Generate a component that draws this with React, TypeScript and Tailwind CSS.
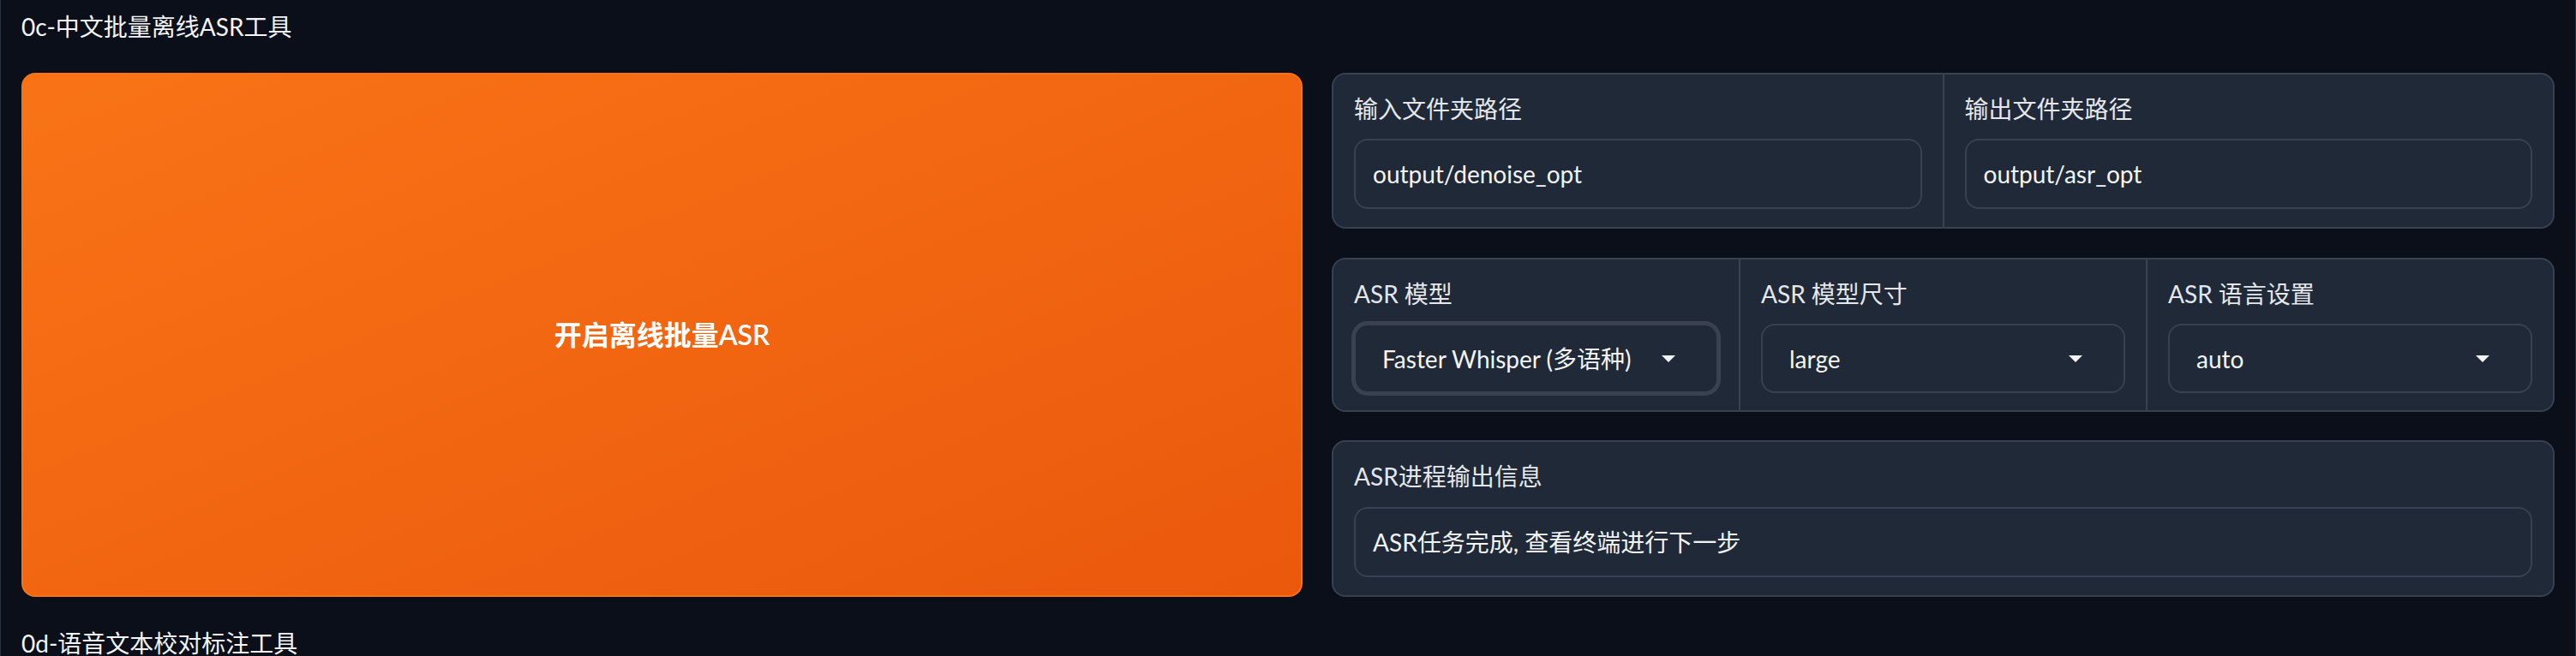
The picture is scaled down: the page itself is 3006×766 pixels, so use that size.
import React from "react";

function Arrow() {
  return (
    <svg width="16" height="8" viewBox="0 0 16 8" className="shrink-0">
      <path d="M0 0 L16 0 L8 8 Z" fill="#f3f4f6" />
    </svg>
  );
}

function TextCell({ label, value, last }: { label: string; value: string; last?: boolean }) {
  return (
    <div className={"flex-1 basis-0 flex flex-col px-6 pt-[19px] pb-[21px] " + (last ? "border-l-2 border-[#374151]" : "")}>
      <div className="h-[42px] leading-[42px] text-[28px] text-[#e5e7eb]">{label}</div>
      <div className="mt-[14px] h-[82px] rounded-2xl border-2 border-[#374151] bg-[#1f2937] flex items-center pl-[20px] text-[28px] text-[#f3f4f6]">
        {value}
      </div>
    </div>
  );
}

function DropCell({ label, value, first, focused }: { label: string; value: string; first?: boolean; focused?: boolean }) {
  return (
    <div className={"flex-1 basis-0 flex flex-col px-6 pt-[19px] pb-[20px] " + (first ? "" : "border-l-2 border-[#374151]")}>
      <div className="h-[42px] leading-[42px] text-[28px] text-[#e5e7eb]">{label}</div>
      <div
        className={
          "mt-[14px] h-[81px] rounded-2xl border-2 border-[#374151] bg-[#1f2937] flex items-center justify-between pl-[31px] pr-[48px] text-[28px] text-[#f3f4f6] " +
          (focused ? "shadow-[0_0_0_3px_#3a4252]" : "")
        }
      >
        <span>{value}</span>
        <Arrow />
      </div>
    </div>
  );
}

export default function App() {
  return (
    <div className="w-[3006px] h-[766px] overflow-hidden bg-[#0b0f19] border-x border-[#2b3240] px-6 pt-[10px] flex flex-col gap-[33px] font-[Lato,'Noto_Sans_CJK_SC',sans-serif]">
      <div className="h-[42px] leading-[42px] text-[28px] text-[#f3f4f6] shrink-0">0c-中文批量离线ASR工具</div>
      <div className="flex gap-[34px] h-[612px] shrink-0">
        <button className="w-[1495px] shrink-0 rounded-2xl border-2 border-[#f97316] bg-linear-to-br from-[#f97316] to-[#ea580c] text-white text-[32px] font-semibold flex items-center justify-center">
          开启离线批量ASR
        </button>
        <div className="flex-1 flex flex-col">
          <div className="flex rounded-2xl border-2 border-[#374151] bg-[#1f2937]">
            <TextCell label="输入文件夹路径" value="output/denoise_opt" />
            <TextCell label="输出文件夹路径" value="output/asr_opt" last />
          </div>
          <div className="mt-[34px] flex rounded-2xl border-2 border-[#374151] bg-[#1f2937]">
            <DropCell label="ASR 模型" value="Faster Whisper (多语种)" first focused />
            <DropCell label="ASR 模型尺寸" value="large" />
            <DropCell label="ASR 语言设置" value="auto" />
          </div>
          <div className="mt-[33px] flex flex-col rounded-2xl border-2 border-[#374151] bg-[#1f2937] px-6 pt-[19px] pb-[21px]">
            <div className="h-[42px] leading-[42px] text-[28px] text-[#e5e7eb]">ASR进程输出信息</div>
            <div className="mt-[15px] h-[82px] rounded-2xl border-2 border-[#374151] bg-[#1f2937] flex items-center pl-[20px] text-[28px] text-[#f3f4f6]">
              ASR任务完成, 查看终端进行下一步
            </div>
          </div>
        </div>
      </div>
      <div className="h-[42px] leading-[42px] text-[28px] text-[#f3f4f6] shrink-0">0d-语音文本校对标注工具</div>
    </div>
  );
}
